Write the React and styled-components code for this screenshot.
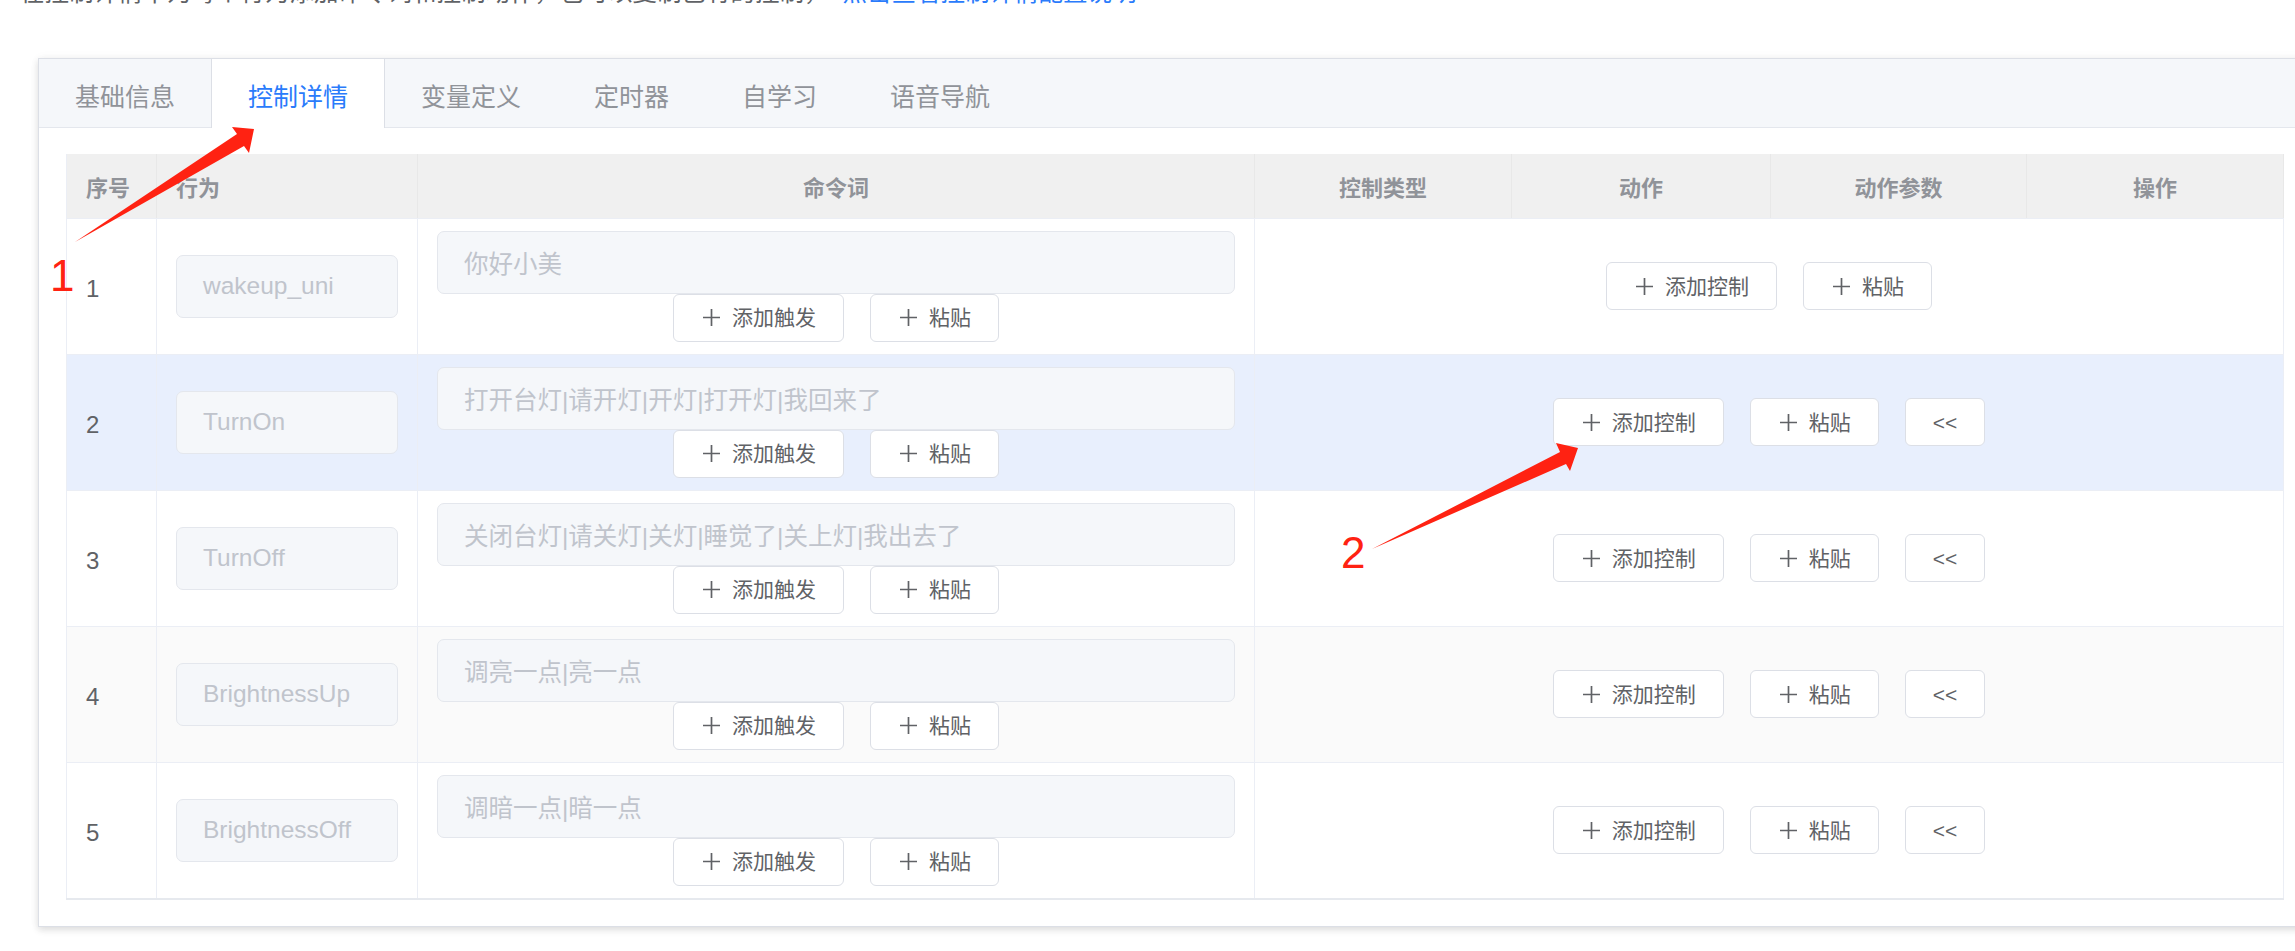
import React from "react";
import styled, { createGlobalStyle } from "styled-components";

const rows = [
  { id: 1, action: "wakeup_uni", words: "你好小美", back: false, tone: "plain" },
  { id: 2, action: "TurnOn", words: "打开台灯|请开灯|开灯|打开灯|我回来了", back: true, tone: "hover" },
  { id: 3, action: "TurnOff", words: "关闭台灯|请关灯|关灯|睡觉了|关上灯|我出去了", back: true, tone: "plain" },
  { id: 4, action: "BrightnessUp", words: "调亮一点|亮一点", back: true, tone: "stripe" },
  { id: 5, action: "BrightnessOff", words: "调暗一点|暗一点", back: true, tone: "plain" },
];

const tabs = ["基础信息", "控制详情", "变量定义", "定时器", "自学习", "语音导航"];

const columns = [
  { title: "序号", width: 90, align: "left" },
  { title: "行为", width: 261, align: "left" },
  { title: "命令词", width: 837, align: "center" },
  { title: "控制类型", width: 257, align: "center" },
  { title: "动作", width: 259, align: "center" },
  { title: "动作参数", width: 256, align: "center" },
  { title: "操作", width: 257, align: "center" },
];

const PlusIcon = () => (
  <svg width="21" height="21" viewBox="0 0 21 21">
    <path d="M10.5 2v17M2 10.5h17" stroke="#606266" strokeWidth="1.7" fill="none" />
  </svg>
);

export default function App() {
  return (
    <Page>
      <GlobalStyle />
      <Intro>
        在控制详情中为每个行为添加命令词和控制动作，也可以复制已有的控制，
        <IntroLink href="#help">点击查看控制详情配置说明</IntroLink>
      </Intro>

      <Card>
        <TabBar>
          {tabs.map((t) => (
            <Tab key={t} $active={t === "控制详情"}>
              {t}
            </Tab>
          ))}
        </TabBar>

        <Panel>
          <Table>
            <colgroup>
              {columns.map((c) => (
                <col key={c.title} style={{ width: c.width }} />
              ))}
            </colgroup>
            <thead>
              <tr>
                {columns.map((c) => (
                  <HeadCell key={c.title} $align={c.align}>
                    {c.title}
                  </HeadCell>
                ))}
              </tr>
            </thead>
            <tbody>
              {rows.map((r) => (
                <Row key={r.id} $tone={r.tone}>
                  <NumberCell>{r.id}</NumberCell>
                  <Cell>
                    <DisabledInput>{r.action}</DisabledInput>
                  </Cell>
                  <Cell>
                    <DisabledInput>{r.words}</DisabledInput>
                    <ButtonRow>
                      <Button>
                        <PlusIcon />
                        添加触发
                      </Button>
                      <Button>
                        <PlusIcon />
                        粘贴
                      </Button>
                    </ButtonRow>
                  </Cell>
                  <Cell colSpan={4}>
                    <ButtonRow>
                      <Button>
                        <PlusIcon />
                        添加控制
                      </Button>
                      <Button>
                        <PlusIcon />
                        粘贴
                      </Button>
                      {r.back && <Button>&lt;&lt;</Button>}
                    </ButtonRow>
                  </Cell>
                </Row>
              ))}
            </tbody>
          </Table>
        </Panel>
      </Card>

      {/* screenshot annotations */}
      <Arrows width="2295" height="951" viewBox="0 0 2295 951">
        <polygon points="75,242 237,134 232,127 254,129 249,153 244,146" />
        <polygon points="1372,549 1560,452 1556,443 1578,448 1570,471 1566,464" />
      </Arrows>
      <Mark $x={50} $y={254}>1</Mark>
      <Mark $x={1341} $y={531}>2</Mark>
    </Page>
  );
}

// -----------Style--------------

const GlobalStyle = createGlobalStyle`
  html, body {
    margin: 0;
    padding: 0;
    overflow: hidden;
    background: #fff;
  }
  body {
    font-family: "Liberation Sans", "Noto Sans CJK SC", sans-serif;
  }
`;

const Page = styled.div`
  position: relative;
  width: 2295px;
  height: 951px;
  overflow: hidden;
`;

const Intro = styled.p`
  margin: -22px 0 0 20px;
  font-size: 24.5px;
  line-height: 30px;
  color: #606266;
  white-space: nowrap;
`;

const IntroLink = styled.a`
  margin-left: 14px;
  color: #2a7bfb;
  text-decoration: none;
`;

const Card = styled.div`
  margin: 50px 0 0 38px;
  width: 2272px;
  box-sizing: border-box;
  border: 1px solid #dcdfe6;
  background: #fff;
  box-shadow: 0 3px 7px 0 rgba(0, 0, 0, 0.12), 0 0 10px 0 rgba(0, 0, 0, 0.04);
`;

const TabBar = styled.div`
  display: flex;
  height: 69px;
  box-sizing: border-box;
  background: #f5f7fa;
  border-bottom: 1px solid #e4e7ed;
`;

const Tab = styled.div`
  flex: none;
  height: 69px;
  box-sizing: border-box;
  padding: 2px 36px 0;
  margin-left: -1px;
  display: flex;
  align-items: center;
  font-size: 25px;
  color: ${(p) => (p.$active ? "#2a7bfb" : "#909399")};
  background: ${(p) => (p.$active ? "#fff" : "transparent")};
  border-left: 1px solid ${(p) => (p.$active ? "#dcdfe6" : "transparent")};
  border-right: 1px solid ${(p) => (p.$active ? "#dcdfe6" : "transparent")};
`;

const Panel = styled.div`
  padding: 26px 26px 26px 27px;
`;

const Table = styled.table`
  width: 2217px;
  table-layout: fixed;
  border-collapse: collapse;
  border-left: 1px solid #ebeef5;
  border-right: 1px solid #ebeef5;
  border-bottom: 2px solid #e6e9ee;
`;

const HeadCell = styled.th`
  height: 64px;
  padding: 0 19px;
  box-sizing: border-box;
  background: #f0f0f0;
  color: #909399;
  font-size: 22px;
  font-weight: bold;
  text-align: ${(p) => p.$align};
  border-right: 1px solid #e8e8e8;
  border-bottom: 1px solid #ebeef5;
`;

const toneColors = {
  plain: "#ffffff",
  hover: "#e8effd",
  stripe: "#fafafa",
};

const Row = styled.tr`
  background: ${(p) => toneColors[p.$tone]};
`;

const Cell = styled.td`
  padding: 12px 19px;
  vertical-align: middle;
  text-align: ${(p) => (p.colSpan > 1 ? "center" : "left")};
  border: 1px solid #ebeef5;
  color: #606266;
  font-size: 24px;
`;

const NumberCell = styled(Cell)`
  padding-top: 17px;
`;

const DisabledInput = styled.div`
  height: 63px;
  box-sizing: border-box;
  padding: 0 26px;
  display: flex;
  align-items: center;
  background: #f5f7fa;
  border: 1px solid #e4e7ed;
  border-radius: 7px;
  color: #c0c4cc;
  font-size: 24.5px;
  white-space: nowrap;
  overflow: hidden;
`;

const ButtonRow = styled.div`
  display: flex;
  justify-content: center;
  gap: 26px;
`;

const Button = styled.button`
  height: 48px;
  box-sizing: border-box;
  padding: 0 27px;
  display: inline-flex;
  align-items: center;
  gap: 10px;
  background: #fff;
  border: 1px solid #dcdfe6;
  border-radius: 6px;
  color: #606266;
  font-family: inherit;
  font-size: 21px;
  line-height: 1;
  cursor: pointer;
`;

const Arrows = styled.svg`
  position: absolute;
  top: 0;
  left: 0;
  pointer-events: none;

  polygon {
    fill: #ff2212;
  }
`;

const Mark = styled.span`
  position: absolute;
  left: ${(p) => p.$x}px;
  top: ${(p) => p.$y}px;
  font-size: 44px;
  line-height: 44px;
  color: #ff2212;
`;
